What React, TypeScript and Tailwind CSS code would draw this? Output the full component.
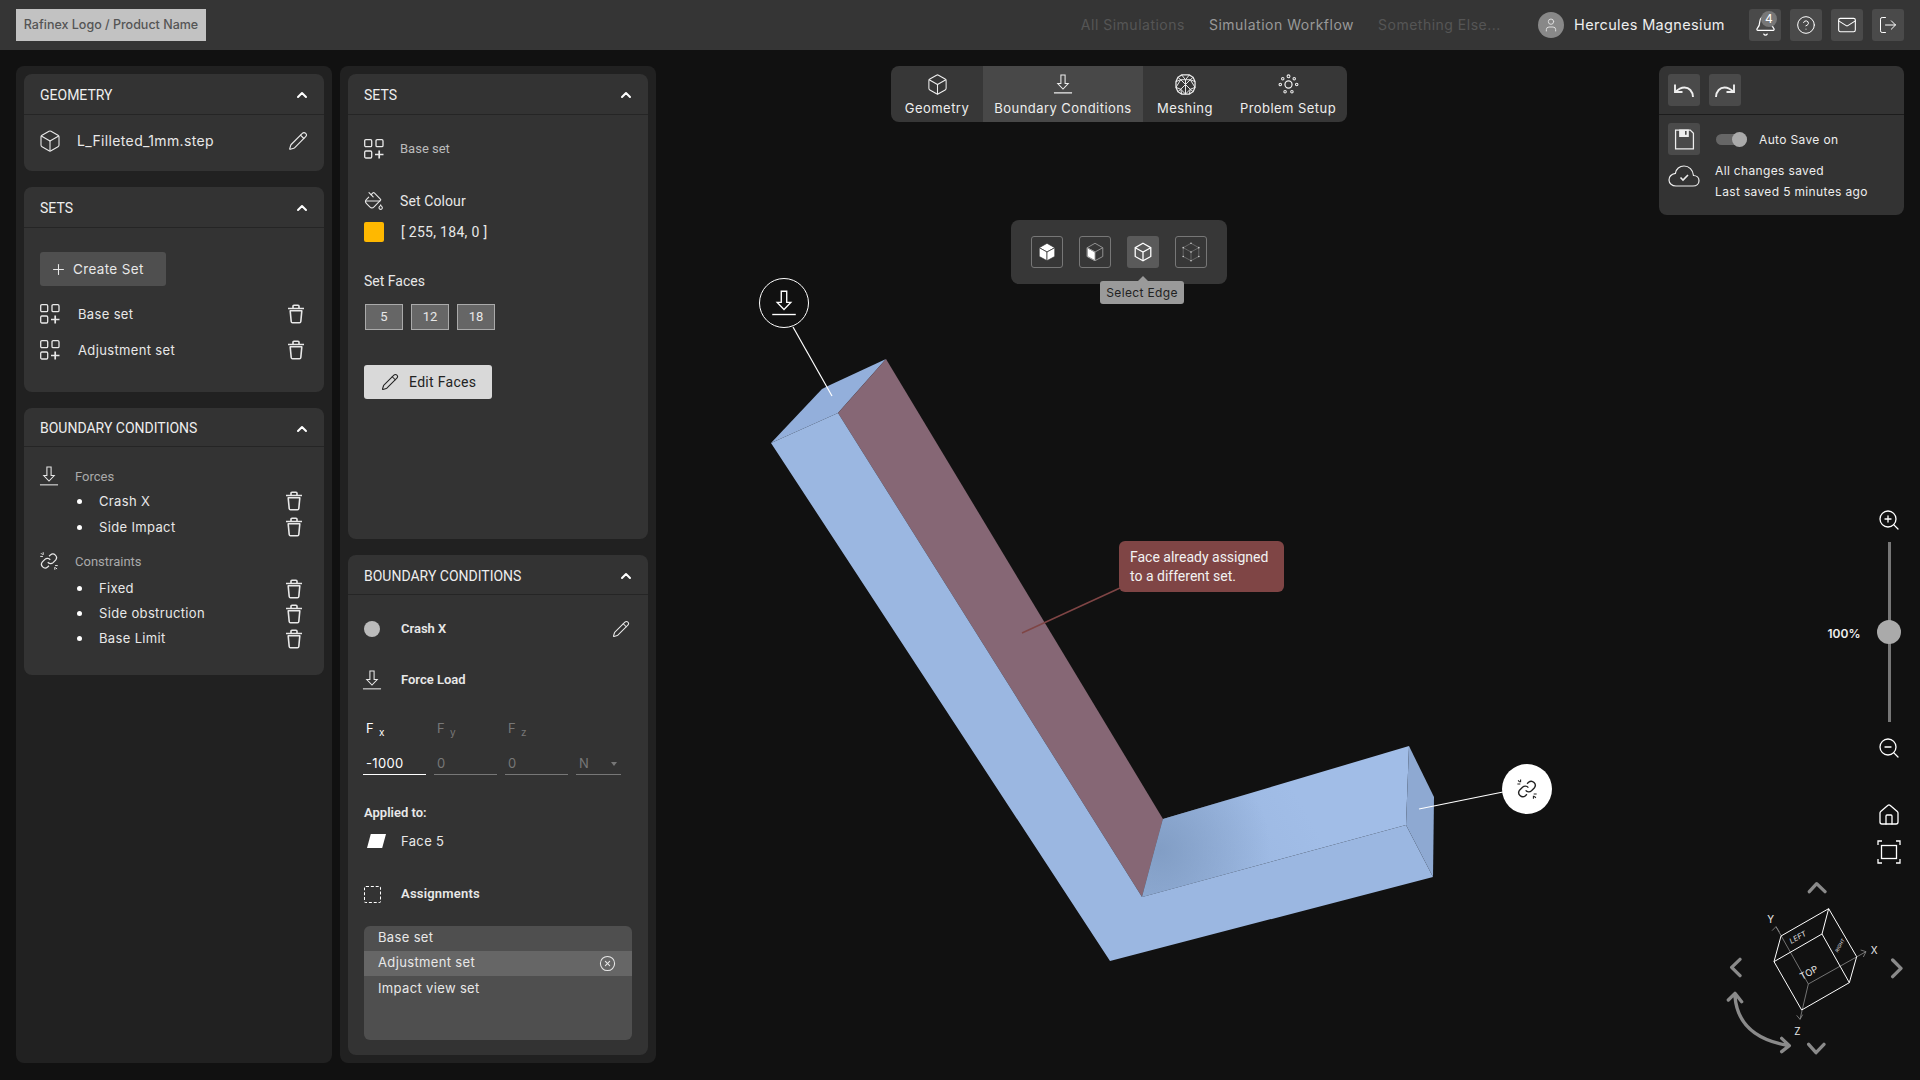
import { Bell, Box, ChevronUp, CircleHelp, CircleX, House, LogOut, Mail, PaintBucket, Pencil, Plus, User, ZoomIn, ZoomOut } from "lucide-react";
import type { ReactNode } from "react";

const exo = "font-[family-name:Roboto,sans-serif] tracking-normal";

function ForceIcon({ className = "w-5 h-5" }: { className?: string }) {
  return (
    <svg viewBox="0 0 20 21" fill="none" stroke="currentColor" strokeWidth="1.1" className={className}>
      <path d="M7.8 1h4.4v9h3.3L10 15.8 4.5 10h3.3z" />
      <path d="M0.5 19.8h19" />
    </svg>
  );
}

function SetIcon() {
  return (
    <svg viewBox="0 0 20 20" fill="none" stroke="currentColor" strokeWidth="1.3" className="w-5 h-5 shrink-0">
      <rect x="0.7" y="0.7" width="7" height="7" rx="1.2" />
      <rect x="12" y="0.7" width="7" height="7" rx="1.2" />
      <rect x="0.7" y="12" width="7" height="7" rx="1.2" />
      <path d="M11 15.5h8.5M15.2 11.5v8" strokeWidth="1.7" />
    </svg>
  );
}

function TrashIcon() {
  return (
    <svg viewBox="0 0 18 20" fill="none" stroke="currentColor" strokeWidth="1.6" className="w-[18px] h-5 shrink-0">
      <path d="M1 4.5h16M6 4V2.2c0-.6.4-1 1-1h4c.6 0 1 .4 1 1V4" />
      <path d="M2.6 6.8h12.8M3.2 7l1 10.5c.1.8.6 1.3 1.3 1.3h7c.7 0 1.2-.5 1.3-1.3l1-10.5" />
    </svg>
  );
}

function BrokenLinkIcon({ className = "w-5 h-5" }: { className?: string }) {
  return (
    <svg viewBox="0 0 24 24" fill="none" stroke="currentColor" strokeWidth="1.5" className={className}>
      <path d="M10.5 13.5a4.4 4.4 0 0 0 6.4.4l3-3a4.4 4.4 0 0 0-6.2-6.2l-1.6 1.6" />
      <path d="M13.5 10.5a4.4 4.4 0 0 0-6.4-.4l-3 3a4.4 4.4 0 0 0 6.2 6.2l1.6-1.6" />
      <path d="M1.5 6.5h3.2M5 1.5v3.2M2.3 2.6l1.8 1.8M19.3 17.5h3.2M19 19.3v3.2M19.9 19.9l1.8 1.8" strokeWidth="1.2" />
    </svg>
  );
}

function MeshIcon() {
  return (
    <svg viewBox="0 0 22 22" fill="none" stroke="currentColor" strokeWidth="1" className="w-[21px] h-[21px]">
      <path d="M7 1h8l4 2.5L21 8v6l-2 4.5L15 21H7l-4-2.5L1 14V8l2-4.5z" strokeWidth="1.3" />
      <path d="M7 1l4 5 4-5M1 8l5-2 5 0 5 0 5 2M6 6l-5 8M16 6l5 8M6 6l5 5 5-5M1 14l5 2 5-5 5 5 5-2M6 16l-3 2.5M16 16l3 2.5M6 16l1 5M16 16l-1 5M6 16l5 5 5-5M3 3.5L6 6M19 3.5L16 6M11 6v5M11 11v10" />
    </svg>
  );
}

function SetupIcon() {
  return (
    <svg viewBox="0 0 22 22" fill="none" stroke="currentColor" strokeWidth="1.1" className="w-[21px] h-[21px]">
      <circle cx="11" cy="11" r="3.7" strokeWidth="1.3" />
      <circle cx="11" cy="2.4" r="1.5" />
      <circle cx="5" cy="5" r="1.3" />
      <circle cx="17" cy="5" r="1.3" />
      <circle cx="2.4" cy="11" r="1.3" />
      <circle cx="19.6" cy="11" r="1.3" />
      <circle cx="7.4" cy="18.6" r="1.3" />
      <circle cx="14.6" cy="18.6" r="1.3" />
    </svg>
  );
}

function UndoIcon({ className = "" }: { className?: string }) {
  return (
    <svg viewBox="0 0 24 24" fill="none" stroke="currentColor" strokeWidth="1.9" className={`h-6 w-6 ${className}`}>
      <path d="M21 19c-.3-6-4-9.500-8.500-9.500-3.300 0-6 1.300-9 4.500" />
      <path d="M3 6.500V14h7.500" />
    </svg>
  );
}

function FloppyIcon() {
  return (
    <svg viewBox="0 0 20 20" fill="none" stroke="currentColor" strokeWidth="1.2" className="h-[21px] w-[21px]">
      <path d="M1.500 1h14l3 3v15h-17z" />
      <path d="M5.500 1h8v6h-8z" fill="currentColor" />
      <path d="M10.500 2v3.500h1.500V2z" fill="#4a4a4a" stroke="none" />
    </svg>
  );
}

function CloudIcon() {
  return (
    <svg viewBox="0 0 32 22" fill="none" stroke="currentColor" strokeWidth="1.2" className="mt-[5px] h-[22px] w-8 shrink-0">
      <path d="M8 21h17c3.500 0 6-2.300 6-5.300s-2.400-5.200-5.500-5.200C25 4.800 21 1 16 1c-4.400 0-8 3-8.600 7.400C3.700 9.200 1 11.800 1 15c0 3.400 3 6 7 6z" />
      <path d="M12.500 12.500l2.500 2.500 5-5" strokeWidth="1.6" />
    </svg>
  );
}

function SelectCube({ mode }: { mode: "solid" | "face" | "edge" | "vertex" }) {
  const hex = "M12 2.5l8.5 4.8v9.6L12 21.5l-8.5-4.6V7.3z";
  return (
    <svg viewBox="0 0 24 24" fill="none" className="w-[22px] h-[22px]">
      {mode === "solid" && (
        <g fill="white" stroke="#333" strokeWidth="0.8">
          <path d="M12 2.5l8.5 4.8L12 12 3.5 7.3z" />
          <path d="M3.5 7.3L12 12v9.5l-8.5-4.6z" />
          <path d="M20.5 7.3L12 12v9.5l8.5-4.6z" />
        </g>
      )}
      {mode === "face" && (
        <g stroke="#999" strokeWidth="1">
          <path d="M3.5 7.3L12 12v9.5l-8.5-4.6z" fill="white" />
          <path d={hex} />
          <path d="M3.5 7.3L12 12l8.5-4.7" />
        </g>
      )}
      {mode === "edge" && (
        <g stroke="white" strokeWidth="1.4">
          <path d={hex} />
          <path d="M3.5 7.3L12 12l8.5-4.7M12 12v9.5" />
        </g>
      )}
      {mode === "vertex" && (
        <g stroke="#777" strokeWidth="0.8">
          <path d={hex} />
          <path d="M3.5 7.3L12 12l8.5-4.7M12 12v9.5" />
          <g fill="#ccc" stroke="none">
            <circle cx="12" cy="2.5" r="0.9" />
            <circle cx="20.5" cy="7.3" r="0.9" />
            <circle cx="20.5" cy="16.9" r="0.9" />
            <circle cx="12" cy="21.5" r="0.9" />
            <circle cx="3.5" cy="16.9" r="0.9" />
            <circle cx="3.5" cy="7.3" r="0.9" />
            <circle cx="12" cy="12" r="0.9" />
          </g>
        </g>
      )}
    </svg>
  );
}

function Card({ title, headerH, className = "", children }: { title: string; headerH: string; className?: string; children: ReactNode }) {
  return (
    <section className={`rounded-lg bg-[#333333] ${className}`}>
      <div className={`flex items-center justify-between border-b border-[#252525] px-4 ${headerH}`}>
        <h2 className={`${exo} text-[14px] text-[#eeeeee]`}>{title}</h2>
        <ChevronUp className="-mr-[2px] h-4 w-4 text-white" strokeWidth={3} />
      </div>
      {children}
    </section>
  );
}

function SetRow({ name }: { name: string }) {
  return (
    <div className="flex h-9 items-center">
      <SetIcon />
      <span className="ml-[18px] flex-1 pt-px text-[13px] text-[#e8e8e8]">{name}</span>
      <span className="mr-[3px]">
        <TrashIcon />
      </span>
    </div>
  );
}

function BcRow({ name, h }: { name: string; h: string }) {
  return (
    <div className={`flex items-center ${h}`}>
      <span className="ml-[38px] h-[5px] w-[5px] rounded-full bg-white" />
      <span className="ml-[17px] flex-1 pt-px text-[13px] text-[#e8e8e8]">{name}</span>
      <TrashIcon />
    </div>
  );
}

function LeftColumn() {
  return (
    <aside className="flex w-[316px] flex-col gap-4 rounded-lg bg-[#212121] p-2">
      <Card title="GEOMETRY" headerH="h-[41px] pt-[2px]">
        <div className="flex h-14 items-start px-4 pt-4 text-[#e8e8e8]">
          <Box className="-m-0.5 h-6 w-6" strokeWidth={1.1} />
          <span className="ml-[17px] flex-1 text-[14px] leading-5">L_Filleted_1mm.step</span>
          <Pencil className="h-[20px] w-[20px]" strokeWidth={1.4} />
        </div>
      </Card>
      <Card title="SETS" headerH="h-[41px] pt-[2px]">
        <div className="px-4 pt-6 pb-6 text-[#e8e8e8]">
          <button className="mb-2.5 flex h-[34px] w-[126px] items-center gap-[6px] rounded-[3px] bg-[#4f4f4f] pt-px pl-[10px] text-[13.5px]">
            <Plus className="h-[17px] w-[17px]" strokeWidth={1.5} />
            Create Set
          </button>
          <SetRow name="Base set" />
          <SetRow name="Adjustment set" />
        </div>
      </Card>
      <Card title="BOUNDARY CONDITIONS" headerH="h-[39px] pt-[3px]">
        <div className="pt-[19px] pr-[21px] pb-[24px] pl-[15px] text-[#e8e8e8]">
          <div className="flex h-5 items-center">
            <ForceIcon />
            <span className={`${exo} ml-4 pt-px text-[13px] text-[#aaaaaa]`}>Forces</span>
          </div>
          <div className="mt-[2px]">
            <BcRow name="Crash X" h="h-[26px]" />
            <BcRow name="Side Impact" h="h-[26px]" />
          </div>
          <div className="mt-[11px] flex h-5 items-center">
            <BrokenLinkIcon />
            <span className={`${exo} ml-4 pt-px text-[13px] text-[#aaaaaa]`}>Constraints</span>
          </div>
          <div className="mt-[5px]">
            <BcRow name="Fixed" h="h-[25px]" />
            <BcRow name="Side obstruction" h="h-[25px]" />
            <BcRow name="Base Limit" h="h-[25px]" />
          </div>
        </div>
      </Card>
    </aside>
  );
}

function ForceField({ label, value, active, wide = true }: { label: string; value: string; active?: boolean; wide?: boolean }) {
  return (
    <div className={wide ? "w-[63px]" : "w-[45px]"}>
      <div className={`flex h-4 items-center pl-[3px] text-[13px] ${active ? "text-white" : "text-[#777777]"}`}>
        {label && (
          <>
            <span>F</span>
            <span className="mt-[6px] ml-[5px] text-[10px]">{label}</span>
          </>
        )}
      </div>
      <div className={`mt-4 flex h-[22px] items-center justify-between border-b px-[3px] text-[13px] ${active ? "border-white text-white" : "border-[#777777] text-[#777777]"}`}>
        {value}
        {!wide && <span className="mr-[1px] h-0 w-0 border-x-[3.5px] border-t-[4px] border-x-transparent border-t-[#777777]" />}
      </div>
    </div>
  );
}

function RightColumn() {
  return (
    <aside className="flex w-[316px] flex-col gap-4 rounded-lg bg-[#212121] p-2">
      <Card title="SETS" headerH="h-[41px] pt-[2px]" className="h-[465px]">
        <div className={`${exo} px-4 pt-[24px] text-[14px] text-[#e8e8e8]`}>
          <div className="flex h-5 items-center">
            <SetIcon />
            <span className="ml-[16px] text-[13px] text-[#bbbbbb]">Base set</span>
          </div>
          <div className="mt-8 flex h-5 items-center">
            <PaintBucket className="h-5 w-5" strokeWidth={1.3} />
            <span className="ml-[16px] tracking-[0.1px]">Set Colour</span>
          </div>
          <div className="mt-[11px] flex h-5 items-center">
            <span className="h-5 w-5 rounded-[2px] bg-[#ffb800]" />
            <span className="ml-[17px] tracking-[0.3px]">[ 255, 184, 0 ]</span>
          </div>
          <div className="mt-[29px] flex h-5 items-center">Set Faces</div>
          <div className="mt-[13px] ml-px flex gap-2">
            {["5", "12", "18"].map((f) => (
              <span key={f} className="flex h-[26px] w-[38px] items-center justify-center border border-[#aaaaaa] bg-[#666666] text-[13px]">
                {f}
              </span>
            ))}
          </div>
          <button className="mt-[35px] flex h-[34px] w-[128px] items-center gap-[10px] rounded-[3px] bg-[#d9d9d9] pl-[17px] text-[14px] tracking-[0.3px] text-[#222222]">
            <Pencil className="h-[18px] w-[18px]" strokeWidth={1.4} />
            Edit Faces
          </button>
        </div>
      </Card>
      <Card title="BOUNDARY CONDITIONS" headerH="h-[40px] pt-[3px]" className="flex-1">
        <div className="px-4 pt-[24px] text-[13px] text-[#e8e8e8]">
          <div className={`${exo} flex h-5 items-center font-semibold`}>
            <span className="mr-[21px] h-4 w-4 rounded-full bg-[#bbbbbb]" />
            <span className="flex-1">Crash X</span>
            <Pencil className="mr-[2px] h-[18px] w-[18px]" strokeWidth={1.4} />
          </div>
          <div className={`${exo} mt-[31px] flex h-5 items-center font-semibold`}>
            <ForceIcon className="-ml-[2px] h-5 w-5" />
            <span className="ml-[19px]">Force Load</span>
          </div>
          <div className="mt-[31px] -ml-px flex gap-2">
            <ForceField label="x" value="-1000" active />
            <ForceField label="y" value="0" />
            <ForceField label="z" value="0" />
            <ForceField label="" value="N" wide={false} />
          </div>
          <div className={`${exo} mt-[28px] flex h-5 items-center font-semibold`}>Applied to:</div>
          <div className="mt-2 flex h-5 items-center">
            <span className="ml-[3px] h-[14px] w-[19px] bg-white [clip-path:polygon(20%_0,100%_0,80%_100%,0_100%)]" />
            <span className="ml-[15px] pt-[2px]">Face 5</span>
          </div>
          <div className={`${exo} mt-[33px] flex h-5 items-center font-semibold`}>
            <span className="h-[17px] w-[17px] rounded-[2px] border-[1.5px] border-dashed border-white" />
            <span className="ml-5 tracking-[0.2px]">Assignments</span>
          </div>
          <ul className="mt-[22px] h-[114px] overflow-hidden rounded-md bg-[#4f4f4f]">
            <li className="flex h-[25px] items-center pb-[2px] pl-[14px]">Base set</li>
            <li className="flex h-[25px] items-center justify-between bg-[#666666] pr-4 pl-[14px]">
              <span className="pb-[2px]">Adjustment set</span>
              <CircleX className="h-[17px] w-[17px]" strokeWidth={1.5} />
            </li>
            <li className="flex h-[25px] items-center pl-[14px]">Impact view set</li>
          </ul>
        </div>
      </Card>
    </aside>
  );
}

function TopBar() {
  return (
    <header className="flex h-[50px] shrink-0 items-center bg-[#353535] pr-4 pl-4">
      <div className="flex h-8 w-[190px] items-center justify-center bg-[#c2c2c2] text-[12.5px] font-medium tracking-normal text-[#555555]">Rafinex Logo / Product Name</div>
      <nav className="ml-auto flex items-center gap-6 pb-[2px] text-[14px] tracking-[0.5px]">
        <span className="text-[#555555]">All Simulations</span>
        <span className="text-[#999999]">Simulation Workflow</span>
        <span className="w-[118px] whitespace-nowrap text-[#555555]">Something Else...</span>
      </nav>
      <div className="ml-[42px] flex h-[26px] w-[26px] items-center justify-center rounded-full bg-[#888888] text-[#dddddd]">
        <User className="h-4 w-4" strokeWidth={1.5} />
      </div>
      <span className="ml-[10px] w-[175px] text-[14.5px] text-[#eeeeee]">Hercules Magnesium</span>
      <div className="flex gap-[9px] text-white">
        <button className="relative flex h-8 w-8 items-center justify-center rounded-[3px] bg-[#4a4a4a]">
          <Bell className="h-[23px] w-[23px]" strokeWidth={1.3} />
          <span className="absolute top-[2px] right-[4px] flex h-4 w-4 items-center justify-center rounded-full bg-[#777777] text-[12px] tracking-normal">4</span>
        </button>
        <button className="flex h-8 w-8 items-center justify-center rounded-[3px] bg-[#4a4a4a]">
          <CircleHelp className="h-[20px] w-[20px]" strokeWidth={1.2} />
        </button>
        <button className="flex h-8 w-8 items-center justify-center rounded-[3px] bg-[#4a4a4a]">
          <Mail className="h-[20px] w-[20px]" strokeWidth={1.3} />
        </button>
        <button className="flex h-8 w-8 items-center justify-center rounded-[3px] bg-[#4a4a4a]">
          <LogOut className="h-[20px] w-[20px]" strokeWidth={1.2} />
        </button>
      </div>
    </header>
  );
}

function ModelView() {
  return (
    <svg viewBox="656 50 1264 1030" className="absolute inset-0 h-full w-full">
      <defs>
        <linearGradient id="inner" gradientUnits="userSpaceOnUse" x1="1150" y1="885" x2="1300" y2="800">
          <stop offset="0" stopColor="#98b4dd" />
          <stop offset="1" stopColor="#a1bde7" />
        </linearGradient>
        <radialGradient id="corner" gradientUnits="userSpaceOnUse" cx="1160" cy="850" r="110">
          <stop offset="0" stopColor="#7f9bc2" stopOpacity="0.9" />
          <stop offset="1" stopColor="#7f9bc2" stopOpacity="0" />
        </radialGradient>
      </defs>
      <path d="M771 443L822 389 830 385 886 359 838 413z" fill="#93afdb" />
      <path d="M838 413L886 359 1163 819 1142 897z" fill="#866775" />
      <path d="M771 443L838 413 1142 897 1406 825 1433 877 1110 961z" fill="#9bb7e1" />
      <path d="M1163 819L1409 746 1406 825 1142 897z" fill="url(#inner)" />
      <path d="M1163 819L1409 746 1406 825 1142 897z" fill="url(#corner)" />
      <path d="M1409 746L1434 797 1433 877 1406 825z" fill="#8ea9d2" />
      <path d="M793 327L832 396" stroke="white" strokeWidth="1.2" />
      <path d="M1503 792L1419 809" stroke="white" strokeWidth="1.2" />
      <path d="M1120 588L1022 633" stroke="#7f4545" strokeWidth="1.5" />
    </svg>
  );
}

function NavCube() {
  return (
    <svg viewBox="0 0 660 660" fill="none" className="absolute right-0 bottom-0 h-[220px] w-[220px]">
      <g stroke="#8a8a8a" strokeWidth="10" strokeLinecap="round" strokeLinejoin="round">
        <path d="M328 95l22-24 25 24M326 553l22 25 24-25M120 298l-25 24 25 25M578 300l25 25-25 25" />
        <path d="M105 410Q115 530 262 556M85 420l20-20 20 25M245 535l23 22-23 18" />
      </g>
      <g stroke="#888" strokeWidth="2.5">
        <path d="M325 372L228 200M216 212l12-12 10 16M325 372L498 275M482 270l16 5-8 16M325 372L300 478M290 466l10 12 8-14" />
      </g>
      <g stroke="white" strokeWidth="3" strokeLinejoin="round">
        <path d="M386 146L470 290 448 368 305 450 222 305 243 228z" />
        <path d="M222 305L366 222 386 146M366 222L448 368M305 450" />
      </g>
      <g fill="#e8e8e8" fontFamily="Inter, sans-serif">
        <text x="202" y="190" fontSize="30">Y</text>
        <text x="512" y="283" fontSize="30">X</text>
        <text x="283" y="524" fontSize="30">Z</text>
        <text x="306" y="360" fontSize="28" transform="rotate(-28 306 360)">TOP</text>
        <text x="274" y="252" fontSize="22" fontStyle="italic" transform="rotate(-30 274 252)">LEFT</text>
        <text x="414" y="278" fontSize="14" fontStyle="italic" transform="rotate(-62 414 278)">RIGHT</text>
      </g>
    </svg>
  );
}

function Viewport() {
  const steps = [
    { label: "Geometry", w: "w-[92px]", icon: <Box className="h-[23px] w-[23px]" strokeWidth={1.1} /> },
    { label: "Boundary Conditions", w: "w-[160px] bg-[#484848]", icon: <ForceIcon /> },
    { label: "Meshing", w: "w-[84px]", icon: <MeshIcon /> },
    { label: "Problem Setup", w: "w-[122px]", icon: <SetupIcon /> },
  ];
  const modes = ["solid", "face", "edge", "vertex"] as const;
  return (
    <main className="relative flex-1">
      <ModelView />

      <div className="absolute top-4 left-[235px] flex h-14 w-[456px] overflow-hidden rounded-lg bg-[#373737] tracking-[0.45px] text-[#eeeeee]">
        {steps.map((s) => (
          <div key={s.label} className={`flex shrink-0 flex-col items-center pt-2 text-[13px] ${s.w}`}>
            <div className="flex h-5 items-center">{s.icon}</div>
            <span className="mt-[5px] whitespace-nowrap">{s.label}</span>
          </div>
        ))}
      </div>

      <div className="absolute top-[170px] left-[355px] flex gap-4 rounded-lg bg-[#373737] px-5 py-4">
        {modes.map((m) => (
          <div key={m} className={`flex h-8 w-8 items-center justify-center rounded-[3px] ${m === "edge" ? "bg-[#5a5a5a]" : "border border-[#777777]"}`}>
            <SelectCube mode={m} />
          </div>
        ))}
      </div>
      <div className="absolute top-[231px] left-[444px] flex h-[23px] w-[84px] items-center justify-center rounded-[3px] bg-[#9a9a9a] text-[12px] text-[#222222]">
        <span className="absolute -top-[5px] left-[38px] h-0 w-0 border-x-[5px] border-b-[5px] border-x-transparent border-b-[#9a9a9a]" />
        Select Edge
      </div>

      <div className="absolute top-[228px] left-[103px] flex h-[50px] w-[50px] items-center justify-center rounded-full border border-white text-white">
        <ForceIcon className="h-[26px] w-[26px]" />
      </div>
      <div className="absolute top-[714px] left-[846px] flex h-[50px] w-[50px] items-center justify-center rounded-full bg-white text-[#222222]">
        <BrokenLinkIcon className="h-[22px] w-[22px]" />
      </div>
      <div className={`${exo} absolute top-[491px] left-[463px] h-[51px] w-[165px] rounded-md bg-[#7f4545] px-[11px] pt-[7px] text-[14px] leading-[19px] tracking-[0.12px] text-[#f2f2f2]`}>
        Face already assigned
        <br />
        to a different set.
      </div>

      <div className="absolute top-4 left-[1003px] h-[149px] w-[245px] rounded-lg bg-[#333333] text-[#eeeeee]">
        <div className="flex h-[49px] gap-[9px] border-b border-[#1c1c1c] pt-2 pl-[9px]">
          <button className="flex h-8 w-8 items-center justify-center rounded-[3px] bg-[#4a4a4a]">
            <UndoIcon />
          </button>
          <button className="flex h-8 w-8 items-center justify-center rounded-[3px] bg-[#4a4a4a]">
            <UndoIcon className="-scale-x-100" />
          </button>
        </div>
        <div className="flex items-center pt-2 pl-[9px] text-[12px]">
          <button className="flex h-8 w-8 items-center justify-center rounded-[3px] bg-[#4a4a4a]">
            <FloppyIcon />
          </button>
          <span className="relative ml-4 h-[11px] w-[31px] rounded-full bg-[#666666]">
            <span className="absolute -top-[2px] right-0 h-[15px] w-[15px] rounded-full bg-[#aaaaaa]" />
          </span>
          <span className="ml-3 pt-[2px]">Auto Save on</span>
        </div>
        <div className="mt-[5px] flex pl-[9px] text-[12px]">
          <CloudIcon />
          <div className="ml-[15px] leading-[21px]">
            <div>All changes saved</div>
            <div>Last saved 5 minutes ago</div>
          </div>
        </div>
      </div>

      <div className="absolute top-[458px] right-[19px] flex w-6 flex-col items-center text-white">
        <ZoomIn className="h-[24px] w-[24px]" strokeWidth={1.3} />
        <div className="relative mt-[10px] h-[180px] w-[3px] bg-[#777777]">
          <span className="absolute top-[78px] -left-[10.5px] h-6 w-6 rounded-full bg-[#aaaaaa]" />
          <span className="absolute top-[83px] -left-[60px] text-[12px] font-semibold tracking-normal text-[#eeeeee]">100%</span>
        </div>
        <ZoomOut className="mt-[14px] h-[24px] w-[24px]" strokeWidth={1.3} />
        <House className="mt-[43px] h-6 w-6" strokeWidth={1.3} />
        <svg viewBox="0 0 24 24" fill="none" stroke="currentColor" strokeWidth="1.3" className="mt-[13px] h-6 w-6">
          <path d="M1 5V1h4M19 1h4v4M23 19v4h-4M5 23H1v-4" />
          <rect x="4.500" y="5.500" width="15" height="13" />
        </svg>
      </div>

      <NavCube />
    </main>
  );
}

export default function App() {
  return (
    <div className="flex h-screen w-screen flex-col overflow-hidden bg-[#111111] font-[family-name:Inter,sans-serif] tracking-[0.35px]">
      <TopBar />
      <div className="flex min-h-0 flex-1">
        <div className="flex gap-2 pt-4 pb-[17px] pl-4">
          <LeftColumn />
          <RightColumn />
        </div>
        <Viewport />
      </div>
    </div>
  );
}
